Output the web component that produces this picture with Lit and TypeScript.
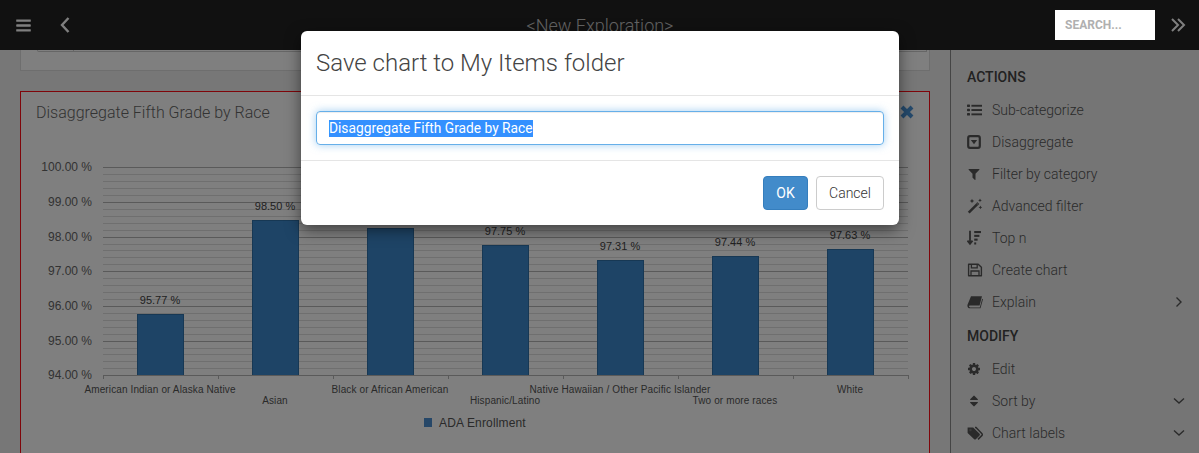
import { LitElement, html, css, svg } from "lit";
import { customElement } from "lit/decorators.js";

const FA = (d: string, size = 16) => html`<svg class="ic" width=${size} height=${size} viewBox="0 0 1792 1792"><path d=${d} fill="currentColor"></path></svg>`;
const S16 = (body: unknown) => html`<svg class="ic" width="16" height="16" viewBox="0 0 16 16">${body}</svg>`;

const BARS = "M1664 1344v128q0 26-19 45t-45 19h-1408q-26 0-45-19t-19-45v-128q0-26 19-45t45-19h1408q26 0 45 19t19 45zm0-512v128q0 26-19 45t-45 19h-1408q-26 0-45-19t-19-45v-128q0-26 19-45t45-19h1408q26 0 45 19t19 45zm0-512v128q0 26-19 45t-45 19h-1408q-26 0-45-19t-19-45v-128q0-26 19-45t45-19h1408q26 0 45 19t19 45z";
const COG = "M1152 896q0-106-75-181t-181-75-181 75-75 181 75 181 181 75 181-75 75-181zm512-109v222q0 12-8 23t-20 13l-185 28q-19 54-39 91 35 50 107 138 10 12 10 25t-9 23q-27 37-99 108t-94 71q-12 0-26-9l-138-108q-44 23-91 38-16 136-29 186-7 28-36 28h-222q-14 0-24.5-8.5t-11.5-21.5l-28-184q-49-16-90-37l-141 107q-10 9-25 9-14 0-25-11-126-114-165-168-7-10-7-23 0-12 8-23 15-21 51-66.5t54-70.5q-27-50-41-99l-183-27q-13-2-21-12.5t-8-23.5v-222q0-12 8-23t19-13l186-28q14-46 39-92-40-57-107-138-10-12-10-24 0-10 9-23 26-36 98.5-107.5t94.5-71.5q13 0 26 10l138 107q44-23 91-38 16-136 29-186 7-28 36-28h222q14 0 24.5 8.5t11.5 21.5l28 184q49 16 90 37l142-107q9-9 24-9 13 0 25 10 129 119 165 170 7 8 7 22 0 12-8 23-15 21-51 66.5t-54 70.5q26 50 41 98l183 28q13 2 21 12.5t8 23.5z";
const FILTER = "M1595 295q17 41-14 70l-493 493v742q0 42-39 59-13 5-25 5-27 0-45-19l-256-256q-19-19-19-45v-486l-493-493q-31-29-14-70 17-39 59-39h1280q42 0 59 39z";
const SORT = "M1408 1088q0 26-19 45l-448 448q-19 19-45 19t-45-19l-448-448q-19-19-19-45t19-45 45-19h896q26 0 45 19t19 45zm0-384q0 26-19 45t-45 19h-896q-26 0-45-19t-19-45 19-45l448-448q19-19 45-19t45 19l448 448q19 19 19 45z";

const listIcon = S16(svg`<g fill="currentColor"><rect x="0" y="2.500" width="3" height="2.400" rx=".6"/><rect x="0" y="6.800" width="3" height="2.400" rx=".6"/><rect x="0" y="11.100" width="3" height="2.400" rx=".6"/><rect x="4.400" y="2.800" width="10.600" height="1.900"/><rect x="4.400" y="7.100" width="10.600" height="1.900"/><rect x="4.400" y="11.400" width="10.600" height="1.900"/></g>`);
const caretBox = S16(svg`<rect x="1.200" y="2.200" width="11.600" height="11.600" rx="1.800" fill="none" stroke="currentColor" stroke-width="2.200"/><path d="M3.800 6h6.400L7 10.200z" fill="currentColor"/>`);
const wand = S16(svg`<path d="M.8 13.800 10.400 4.200l1.800 1.800L2.600 15.600z" fill="currentColor"/><path d="M9 5.600 10.400 4.200l1.800 1.800-1.400 1.400z" fill="#808080"/><g fill="currentColor"><path d="M5 .8l.7 1.500 1.500.7-1.500.7L5 5.200l-.7-1.500-1.500-.7 1.500-.7z"/><path d="M13 .6l.6 1.200 1.200.6-1.200.6-.6 1.200-.6-1.200-1.200-.6 1.200-.6z"/><path d="M13.400 7.600l.6 1.200 1.200.6-1.200.6-.6 1.200-.6-1.200-1.200-.6 1.200-.6z"/></g>`);
const topN = S16(svg`<path d="M3 .8v12M.5 10.600l2.500 3.200 2.500-3.200" fill="none" stroke="currentColor" stroke-width="1.800"/><g fill="currentColor"><rect x="7.200" y="1" width="6.800" height="2.100"/><rect x="7.200" y="4.800" width="5.200" height="2.100"/><rect x="7.200" y="8.600" width="3.400" height="2.100"/><rect x="7.200" y="12.400" width="2" height="2.100"/></g>`);
const floppy = S16(svg`<path d="M1.600 2.200h9.600l3.200 3v8.600H1.600z" fill="none" stroke="currentColor" stroke-width="1.400" stroke-linejoin="round"/><path d="M4.400 2.400v3.400h5.800V2.400M4 13.600V9h8v4.600" fill="none" stroke="currentColor" stroke-width="1.300"/>`);
const book = S16(svg`<path d="M4 2.200h11l-2.400 9.200H3.200c-1 0-1.400.6-1.200 1.200.1.4.5.8 1.200.8h9.600l2.400-8.600.8.5-2.500 9H3c-1.500 0-2.600-1-2.600-2.600 0-.4.1-.8.2-1.200z" fill="currentColor"/>`);
const tags = S16(svg`<path d="M.6 2.400h5.600l6.400 6.400c.5.5.5 1.100 0 1.600l-3.800 3.800c-.5.5-1.100.5-1.600 0L.6 8z" fill="currentColor"/><circle cx="3.400" cy="5" r="1.200" fill="#757575"/><path d="M8 2.400h1l6 6.400c.5.5.5 1.100 0 1.600l-4 4" fill="none" stroke="currentColor" stroke-width="1.500"/>`);

interface Item { label: string; icon: unknown; tail?: "right" | "down"; }
const ACTIONS: Item[] = [
  { label: "Sub-categorize", icon: listIcon },
  { label: "Disaggregate", icon: caretBox },
  { label: "Filter by category", icon: FA(FILTER, 14) },
  { label: "Advanced filter", icon: wand },
  { label: "Top n", icon: topN },
  { label: "Create chart", icon: floppy },
  { label: "Explain", icon: book, tail: "right" },
];
const MODIFY: Item[] = [
  { label: "Edit", icon: FA(COG, 14) },
  { label: "Sort by", icon: FA(SORT, 14), tail: "down" },
  { label: "Chart labels", icon: tags, tail: "down" },
];

const BARS_DATA = [
  { v: "95.77 %", x: 137, top: 314, c: "American Indian or Alaska Native", row: 0 },
  { v: "98.50 %", x: 252, top: 219.5, c: "Asian", row: 1 },
  { v: "98.25 %", x: 367, top: 228, c: "Black or African American", row: 0 },
  { v: "97.75 %", x: 482, top: 245, c: "Hispanic/Latino", row: 1 },
  { v: "97.31 %", x: 597, top: 260, c: "Native Hawaiian / Other Pacific Islander", row: 0 },
  { v: "97.44 %", x: 712, top: 256, c: "Two or more races", row: 1 },
  { v: "97.63 %", x: 827, top: 249, c: "White", row: 0 },
];

function chart() {
  const base = 375.3, step = 34.67, lines = [];
  for (let i = 1; i <= 30; i++) {
    const y = Math.round(base - (i * step) / 5) + 0.5;
    lines.push(svg`<line x1="103" x2="908" y1=${y} y2=${y} stroke=${i % 5 === 0 ? "#b4b4b4" : "#dedede"}></line>`);
  }
  const yLabels = [0, 1, 2, 3, 4, 5, 6].map(
    (i) => svg`<text x="92" y=${base - i * step + 4} text-anchor="end" class="yl">${(94 + i).toFixed(2)} %</text>`
  );
  const ticks = [0, 1, 2, 3, 4, 5, 6, 7].map((i) => svg`<line x1=${103 + i * 115 + 0.5} x2=${103 + i * 115 + 0.5} y1="375" y2="379" stroke="#b4b4b4"></line>`);
  return html`<svg class="chart" width="908" height="321" viewBox="21 132 908 321">
    ${lines}
    ${BARS_DATA.map((b) => svg`
      <rect x=${b.x + 0.5} y=${Math.round(b.top) + 0.5} width="46" height=${375 - Math.round(b.top)} fill="#3d88cc" stroke="#2f70a8"></rect>
      ${b.v === "98.25 %" ? "" : svg`<text x=${b.x + 23} y=${Math.round(b.top) - 10} text-anchor="middle" class="val">${b.v}</text>`}
      <text x=${b.x + 23} y=${b.row ? 404 : 393} text-anchor="middle" class="cat">${b.c}</text>
    `)}
    <line x1="103" x2="908" y1="375.5" y2="375.5" stroke="#b4b4b4"></line>
    ${ticks}
    ${yLabels}
    <rect x="424" y="418" width="8" height="9" fill="#4d8fd0"></rect>
    <text x="439" y="427" class="leg">ADA Enrollment</text>
  </svg>`;
}

@customElement("app-root")
export class AppRoot extends LitElement {
  static styles = css`
    :host { display: block; position: relative; width: 1199px; height: 453px; overflow: hidden; background: #efefef;
      font-family: Roboto, "Liberation Sans", sans-serif; color: #555; }
    .ic { display: block; flex: none; }
    .topbar { height: 50px; background: #222; display: flex; align-items: center; padding: 0 13px 0 15px; box-sizing: border-box; color: #fff; }
    .menu { display: flex; }
    .back { margin-left: 27px; display: flex; }
    .title { flex: 1; text-align: center; font-size: 18px; font-weight: 300; color: #c8c8c8; margin-left: 74px; }
    .search { position: relative; z-index: 3; width: 100px; height: 30px; background: #fff; box-sizing: border-box; padding-left: 10px;
      display: flex; align-items: center; font-size: 12px; font-weight: 700; color: #b0b0b0; margin-right: 15px; }
    .fwd { display: flex; }
    .main { display: flex; height: 403px; }
    .content { width: 950px; padding: 0 20px; box-sizing: border-box; flex: none; }
    .topcard { height: 21px; box-sizing: border-box; background: #fff; border: 1px solid #ddd; border-top: 0; }
    .strip { height: 2px; margin-left: 16px; border: 1px solid #ccc; border-top: 0; border-radius: 0 0 0 4px; width: 890px; box-sizing: border-box; display: flex; }
    .strip i { display: block; width: 35px; height: 1px; border-right: 1px solid #ccc; }
    .card { margin-top: 20px; height: 420px; background: #fff; border: 1px solid #ff0a14; box-sizing: border-box; }
    .cardhead { height: 40px; display: flex; align-items: center; justify-content: space-between; padding: 0 15px; box-sizing: border-box; }
    .cardtitle { font-size: 16px; font-weight: 300; color: #666; }
    .close { color: #4a94d8; }
    .chart { display: block; font-family: "Liberation Sans", Arial, sans-serif; }
    .yl { font-size: 12px; fill: #666; }
    .val { font-size: 11px; fill: #444; }
    .cat { font-size: 10px; fill: #555; letter-spacing: .12px; }
    .leg { font-size: 12px; fill: #555; letter-spacing: .15px; }
    .side { flex: 1; background: #ebebeb; border-left: 1px solid #8a8a8a; padding: 18px 0 0 16px; box-sizing: border-box; }
    .hd { font-size: 14px; font-weight: 500; color: #444; height: 18px; line-height: 18px; }
    .hd.second { margin-top: 9px; margin-bottom: 8px; }
    .hd.first { margin-bottom: 8px; }
    .row { height: 32px; display: flex; align-items: center; font-size: 14px; font-weight: 300; color: #555; padding-right: 14px; }
    .icw { width: 25px; flex: none; color: #555; }
    .grow { flex: 1; }
    .backdrop { position: absolute; inset: 0; background: rgba(0, 0, 0, .5); z-index: 1; }
    .modal { position: absolute; z-index: 2; left: 301px; top: 31px; width: 598px; height: 194px; background: #fff; border-radius: 6px;
      box-shadow: 0 5px 15px rgba(0, 0, 0, .5); display: flex; flex-direction: column; }
    .mhead { height: 65px; border-bottom: 1px solid #e5e5e5; box-sizing: border-box; padding: 0 15px; display: flex; align-items: center; font-size: 24px; font-weight: 300; color: #444; }
    .mbody { height: 65px; border-bottom: 1px solid #e5e5e5; box-sizing: border-box; padding: 15px 15px 0; }
    .input { height: 34px; box-sizing: border-box; border: 1px solid #66afe9; border-radius: 4px; padding: 0 12px; display: flex; align-items: center; font-size: 13.75px;
      box-shadow: inset 0 1px 1px rgba(0, 0, 0, .075), 0 0 8px rgba(102, 175, 233, .6); color: #fff; }
    .input span { background: #3390ff; line-height: 17px; }
    .mfoot { flex: 1; display: flex; justify-content: flex-end; gap: 8px; padding: 15px 15px 0; }
    .btn { height: 34px; box-sizing: border-box; border-radius: 4px; font-size: 14px; font-weight: 300; display: flex; align-items: center; justify-content: center; }
    .ok { width: 45px; background: #428bca; color: #fff; border: 1px solid #357ebd; font-weight: 400; }
    .cancel { width: 68px; background: #fff; color: #333; border: 1px solid #ccc; }
  `;

  private rows(items: Item[]) {
    return items.map((it) => html`<div class="row">
      <span class="icw">${it.icon}</span><span>${it.label}</span><span class="grow"></span>
      ${it.tail === "right"
        ? html`<svg width="12" height="12" viewBox="0 0 12 12"><path d="M3.500 1.500 8 6l-4.500 4.500" fill="none" stroke="#555" stroke-width="1.400"/></svg>`
        : it.tail === "down"
        ? html`<svg width="12" height="12" viewBox="0 0 12 12"><path d="M1 3.500 6 8l5-4.500" fill="none" stroke="#555" stroke-width="1.400"/></svg>`
        : ""}
    </div>`);
  }

  render() {
    return html`
      <div class="topbar">
        <span class="menu">${FA(BARS, 17)}</span>
        <span class="back"><svg width="12" height="20" viewBox="0 0 12 20"><path d="M9.500 3 3 10l6.500 7" fill="none" stroke="#fff" stroke-width="2.400"/></svg></span>
        <span class="title">&lt;New Exploration&gt;</span>
        <span class="search">SEARCH...</span>
        <span class="fwd"><svg width="16" height="16" viewBox="0 0 16 16"><path d="M2 2l6 6-6 6M8 2l6 6-6 6" fill="none" stroke="#fff" stroke-width="2"/></svg></span>
      </div>
      <div class="main">
        <div class="content">
          <div class="topcard"><div class="strip"><i></i></div></div>
          <div class="card">
            <div class="cardhead">
              <span class="cardtitle">Disaggregate Fifth Grade by Race</span>
              <svg class="close" width="14" height="14" viewBox="0 0 14 14"><path d="M2 2l10 10M12 2 2 12" stroke="currentColor" stroke-width="4" fill="none"/></svg>
            </div>
            ${chart()}
          </div>
        </div>
        <div class="side">
          <div class="hd first">ACTIONS</div>
          ${this.rows(ACTIONS)}
          <div class="hd second">MODIFY</div>
          ${this.rows(MODIFY)}
        </div>
      </div>
      <div class="backdrop"></div>
      <div class="modal">
        <div class="mhead">Save chart to My Items folder</div>
        <div class="mbody"><div class="input"><span>Disaggregate Fifth Grade by Race</span></div></div>
        <div class="mfoot"><div class="btn ok">OK</div><div class="btn cancel">Cancel</div></div>
      </div>
    `;
  }
}
